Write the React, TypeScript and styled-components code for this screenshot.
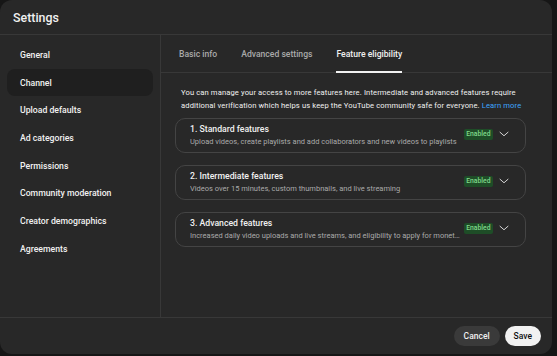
import React from 'react'
import styled, { createGlobalStyle } from 'styled-components'

const GlobalStyle = createGlobalStyle`
  html, body {
    margin: 0;
    padding: 0;
    background: #161616;
    font-family: Roboto, 'Liberation Sans', Arial, sans-serif;
    -webkit-font-smoothing: antialiased;
  }
`

const navItems = [
  'General',
  'Channel',
  'Upload defaults',
  'Ad categories',
  'Permissions',
  'Community moderation',
  'Creator demographics',
  'Agreements',
]

const tabs = ['Basic info', 'Advanced settings', 'Feature eligibility']

const features = [
  {
    title: '1. Standard features',
    desc: 'Upload videos, create playlists and add collaborators and new videos to playlists',
  },
  {
    title: '2. Intermediate features',
    desc: 'Videos over 15 minutes, custom thumbnails, and live streaming',
  },
  {
    title: '3. Advanced features',
    desc: 'Increased daily video uploads and live streams, and eligibility to apply for monetization features',
  },
]

const Chevron = () => (
  <svg width="12" height="12" viewBox="0 0 24 24" fill="none">
    <path d="M4 8.5l8 7 8-7" stroke="#e8e8e8" strokeWidth="1.8" strokeLinecap="round" strokeLinejoin="round" />
  </svg>
)

export default function App() {
  return (
    <>
      <GlobalStyle />
      <Dialog>
        <Header>Settings</Header>
        <Body>
          <Sidebar>
            {navItems.map((n) => (
              <NavItem key={n} $active={n === 'Channel'}>
                {n}
              </NavItem>
            ))}
          </Sidebar>
          <Main>
            <TabBar>
              {tabs.map((t) => (
                <Tab key={t} $active={t === 'Feature eligibility'}>
                  {t}
                </Tab>
              ))}
            </TabBar>
            <Content>
              <Intro>
                You can manage your access to more features here. Intermediate and advanced features require
                <br />
                additional verification which helps us keep the YouTube community safe for everyone.{' '}
                <Link>Learn more</Link>
              </Intro>
              <CardList>
                {features.map((f) => (
                  <FeatureCard key={f.title}>
                    <CardText>
                      <CardTitle>{f.title}</CardTitle>
                      <CardDesc>{f.desc}</CardDesc>
                    </CardText>
                    <Badge>Enabled</Badge>
                    <ChevronWrap>
                      <Chevron />
                    </ChevronWrap>
                  </FeatureCard>
                ))}
              </CardList>
            </Content>
          </Main>
        </Body>
        <Footer>
          <Button>Cancel</Button>
          <Button $primary>Save</Button>
        </Footer>
      </Dialog>
    </>
  )
}

const Dialog = styled.div`
  width: 552px;
  height: 354px;
  background: #282828;
  border-radius: 12px;
  display: flex;
  flex-direction: column;
  overflow: hidden;
  color: #f1f1f1;
`

const Header = styled.div`
  height: 34px;
  flex-shrink: 0;
  display: flex;
  align-items: center;
  padding-left: 13px;
  font-size: 12.4px;
  font-weight: 500;
  border-bottom: 1px solid #383838;
`

const Body = styled.div`
  flex: 1;
  display: flex;
  min-height: 0;
`

const Sidebar = styled.div`
  width: 161px;
  flex-shrink: 0;
  border-right: 1px solid #383838;
  padding: 6px 7px 0;
  box-sizing: border-box;
  display: flex;
  flex-direction: column;
`

const NavItem = styled.div<{ $active?: boolean }>`
  height: 27.7px;
  display: flex;
  align-items: center;
  padding-left: 13px;
  border-radius: 8px;
  font-size: 8.7px;
  font-weight: 500;
  color: #f1f1f1;
  background: ${(p) => (p.$active ? '#1f1f1f' : 'transparent')};
`

const Main = styled.div`
  flex: 1;
  min-width: 0;
  display: flex;
  flex-direction: column;
`

const TabBar = styled.div`
  height: 37px;
  flex-shrink: 0;
  display: flex;
  align-items: stretch;
  gap: 24px;
  padding-left: 18px;
  border-bottom: 1px solid #383838;
`

const Tab = styled.div<{ $active?: boolean }>`
  display: flex;
  align-items: center;
  padding-top: 2px;
  box-sizing: border-box;
  font-size: 8.6px;
  font-weight: 500;
  color: ${(p) => (p.$active ? '#f1f1f1' : '#aaaaaa')};
  border-bottom: 2px solid ${(p) => (p.$active ? '#f1f1f1' : 'transparent')};
  margin-bottom: -1px;
`

const Content = styled.div`
  padding: 13px 26px 0 14px;
`

const Intro = styled.div`
  padding-left: 6px;
  font-size: 7.6px;
  letter-spacing: 0.12px;
  line-height: 13px;
  white-space: nowrap;
  color: #f1f1f1;
`

const Link = styled.span`
  color: #3ea6ff;
`

const CardList = styled.div`
  margin-top: 6px;
  display: flex;
  flex-direction: column;
  gap: 12px;
`

const FeatureCard = styled.div`
  height: 35px;
  box-sizing: border-box;
  border: 1px solid #444444;
  border-radius: 10px;
  display: flex;
  align-items: center;
  padding: 0 15px 0 14px;
`

const CardText = styled.div`
  flex: 1;
  min-width: 0;
  display: flex;
  flex-direction: column;
  gap: 2px;
`

const CardTitle = styled.div`
  font-size: 8.7px;
  font-weight: 500;
  line-height: 11px;
  color: #f1f1f1;
`

const CardDesc = styled.div`
  font-size: 7.5px;
  line-height: 10px;
  color: #aaaaaa;
  white-space: nowrap;
  overflow: hidden;
  text-overflow: ellipsis;
`

const Badge = styled.div`
  flex-shrink: 0;
  margin-left: 3px;
  margin-bottom: 3px;
  height: 11px;
  padding: 0 2.5px;
  border-radius: 2px;
  background: #1e4d27;
  color: #7ed98a;
  font-size: 6.8px;
  font-weight: 500;
  display: flex;
  align-items: center;
`

const ChevronWrap = styled.div`
  margin-left: 5px;
  margin-bottom: 3px;
  display: flex;
  align-items: center;
`

const Footer = styled.div`
  height: 36px;
  flex-shrink: 0;
  border-top: 1px solid #383838;
  display: flex;
  align-items: center;
  justify-content: flex-end;
  gap: 5px;
  padding-right: 11px;
`

const Button = styled.div<{ $primary?: boolean }>`
  height: 20px;
  padding: 0 ${(p) => (p.$primary ? '9px' : '10px')};
  border-radius: 10px;
  display: flex;
  align-items: center;
  font-size: 8.5px;
  font-weight: 500;
  background: ${(p) => (p.$primary ? '#f1f1f1' : '#3a3a3a')};
  color: ${(p) => (p.$primary ? '#0f0f0f' : '#f1f1f1')};
`
